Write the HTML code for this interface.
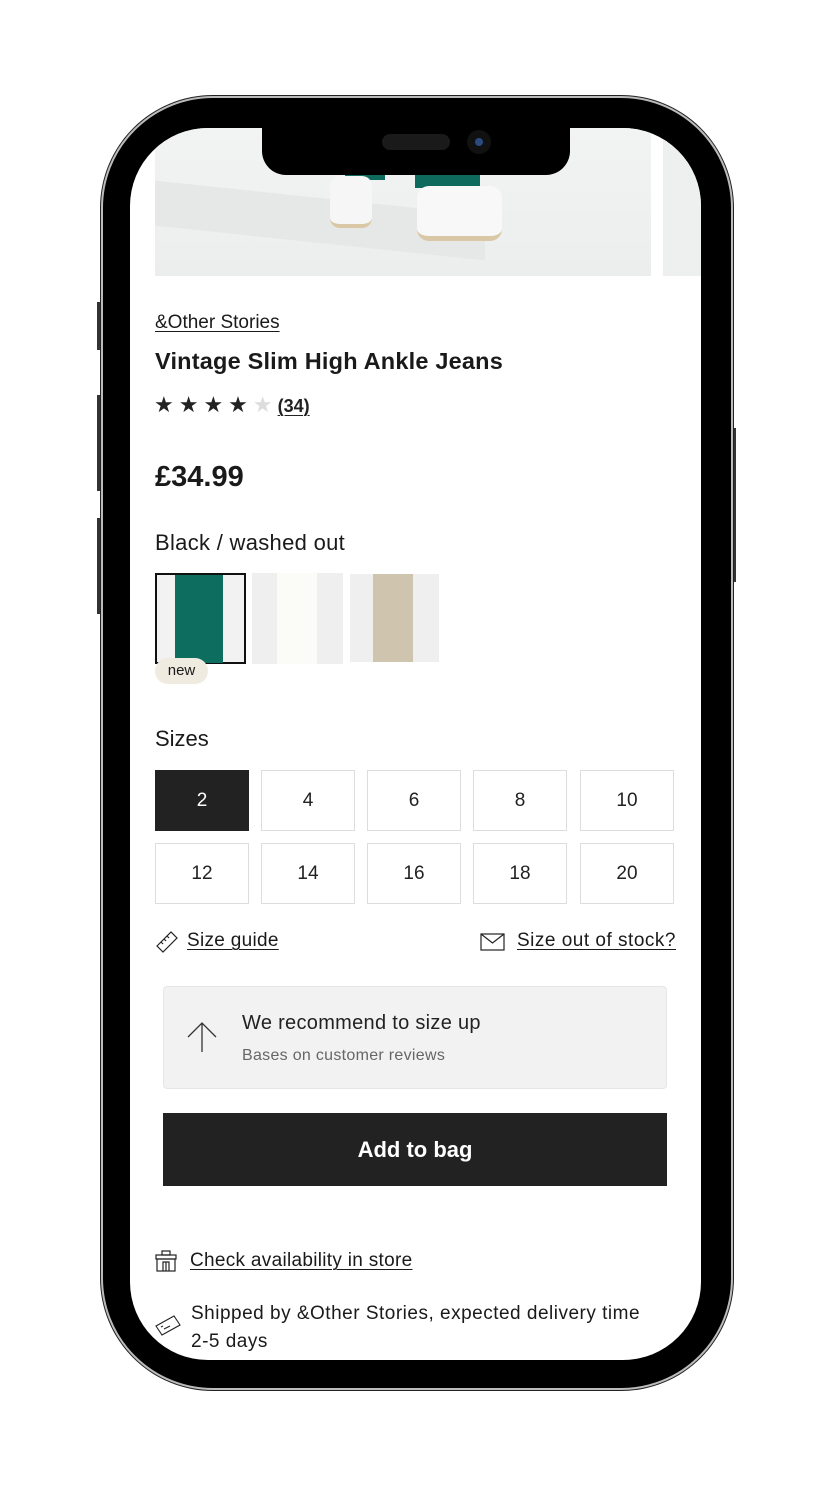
<!DOCTYPE html>
<html><head><meta charset="utf-8"><style>
*{box-sizing:border-box;margin:0;padding:0}
body{width:832px;height:1487px;background:#fff;position:relative;overflow:hidden;font-family:"Liberation Sans",sans-serif;color:#1a1a1a}
.frame{position:absolute;left:101px;top:96px;width:632px;height:1294px;border-radius:112px;background:#000;border:2px solid #bbb;box-shadow:0 0 0 1px #222}
.btn{position:absolute;background:#333;width:4px}
.screen{position:absolute;left:130px;top:128px;width:571px;height:1232px;border-radius:78px;background:#fff;overflow:hidden}
.notch{position:absolute;left:262px;top:120px;width:308px;height:55px;background:#000;border-radius:0 0 24px 24px}
.abs{position:absolute}
u{text-decoration:underline;text-underline-offset:3px;text-decoration-thickness:1px}
.sz{position:absolute;width:94px;height:61px;border:1px solid #ddd;display:flex;align-items:center;justify-content:center;font-size:19px;color:#222}
</style></head><body>
<div class="btn" style="left:97px;top:302px;height:48px"></div>
<div class="btn" style="left:97px;top:395px;height:96px"></div>
<div class="btn" style="left:97px;top:518px;height:96px"></div>
<div class="btn" style="left:732px;top:428px;height:154px"></div>
<div class="frame"></div>
<div class="screen">
 <div class="abs" style="left:25px;top:0;width:496px;height:148px;background:linear-gradient(#f2f3f3,#eceeee);overflow:hidden">
  <div class="abs" style="left:0;top:70px;width:330px;height:45px;background:#e6e8e8;transform:skewY(6deg)"></div>
  <div class="abs" style="left:190px;top:30px;width:40px;height:22px;background:#0d6a5c"></div>
  <div class="abs" style="left:260px;top:30px;width:65px;height:30px;background:#0d6a5c"></div>
  <div class="abs" style="left:175px;top:48px;width:42px;height:52px;background:#f6f6f6;border-radius:10px;border-bottom:4px solid #d9c7a5"></div>
  <div class="abs" style="left:262px;top:58px;width:85px;height:55px;background:#f8f8f8;border-radius:12px;border-bottom:5px solid #d9c7a5"></div>
 </div>
 <div class="abs" style="left:533px;top:0;width:40px;height:148px;background:#eef0f0"></div>
 <div class="abs" style="left:25px;top:184px;font-size:19px"><u>&amp;Other Stories</u></div>
 <div class="abs" style="left:25px;top:220px;font-size:23.5px;font-weight:bold;letter-spacing:0.2px">Vintage Slim High Ankle Jeans</div>
 <div class="abs" style="left:24px;top:264px;font-size:22px;letter-spacing:5px;color:#222">★★★★<span style="color:#ddd">★</span><b style="font-size:18px;letter-spacing:0"><u>(34)</u></b></div>
 <div class="abs" style="left:25px;top:333px;font-size:29px;font-weight:bold">£34.99</div>
 <div class="abs" style="left:25px;top:402px;font-size:22px;letter-spacing:0.3px">Black / washed out</div>
 <div class="abs" style="left:25px;top:445px;width:91px;height:91px;border:2px solid #111;background:#f2f2f2">
  <div class="abs" style="left:18px;top:0;width:48px;height:88px;background:#0d6e60"></div></div>
 <div class="abs" style="left:122px;top:445px;width:91px;height:91px;background:#efefef">
  <div class="abs" style="left:25px;top:0;width:40px;height:91px;background:#fbfbf8"></div></div>
 <div class="abs" style="left:220px;top:446px;width:89px;height:88px;background:#efefef">
  <div class="abs" style="left:23px;top:0;width:40px;height:88px;background:#cfc5ae"></div></div>
 <div class="abs" style="left:25px;top:530px;width:53px;height:26px;border-radius:13px;background:#f0ebe0;font-size:15px;text-align:center;line-height:26px">new</div>
 <div class="abs" style="left:25px;top:598px;font-size:22px">Sizes</div>
 <div class="sz" style="left:25px;top:642px;background:#222;color:#fff;border-color:#222">2</div>
 <div class="sz" style="left:131px;top:642px">4</div>
 <div class="sz" style="left:237px;top:642px">6</div>
 <div class="sz" style="left:343px;top:642px">8</div>
 <div class="sz" style="left:450px;top:642px">10</div>
 <div class="sz" style="left:25px;top:715px">12</div>
 <div class="sz" style="left:131px;top:715px">14</div>
 <div class="sz" style="left:237px;top:715px">16</div>
 <div class="sz" style="left:343px;top:715px">18</div>
 <div class="sz" style="left:450px;top:715px">20</div>
 <svg class="abs" style="left:25px;top:802px" width="24" height="24" viewBox="0 0 24 24" fill="none" stroke="#222" stroke-width="1.2"><path d="M2 16L16 2l6 6L8 22z M6 12l2 2 M9 9l2 2 M12 6l2 2"/></svg>
 <div class="abs" style="left:57px;top:802px;font-size:19px;letter-spacing:0.3px"><u>Size guide</u></div>
 <svg class="abs" style="left:350px;top:805px" width="25" height="18" viewBox="0 0 25 18" fill="none" stroke="#222" stroke-width="1.2"><rect x="1" y="1" width="23" height="16"/><path d="M1 1l11.5 9L24 1"/></svg>
 <div class="abs" style="left:387px;top:802px;font-size:19px;letter-spacing:0.5px"><u>Size out of stock?</u></div>
 <div class="abs" style="left:33px;top:858px;width:504px;height:103px;background:#f2f2f2;border:1px solid #e6e6e6;border-radius:4px">
  <svg class="abs" style="left:22px;top:34px" width="32" height="32" viewBox="0 0 32 32" fill="none" stroke="#333" stroke-width="1.3"><path d="M16 31V2 M2 16L16 2l14 14"/></svg>
  <div class="abs" style="left:78px;top:25px;font-size:20px;color:#222;letter-spacing:0.3px">We recommend to size up</div>
  <div class="abs" style="left:78px;top:60px;font-size:16px;color:#666;letter-spacing:0.3px">Bases on customer reviews</div>
 </div>
 <div class="abs" style="left:33px;top:985px;width:504px;height:73px;background:#222;color:#fff;font-size:22px;font-weight:bold;text-align:center;line-height:73px">Add to bag</div>
 <svg class="abs" style="left:25px;top:1122px" width="22" height="22" viewBox="0 0 22 22" fill="none" stroke="#222" stroke-width="1.2"><rect x="7" y="1" width="8" height="4"/><rect x="1" y="5" width="20" height="4"/><rect x="2" y="9" width="18" height="12"/><path d="M8 21V12h6v9 M11 12v9"/></svg>
 <div class="abs" style="left:60px;top:1122px;font-size:19px;letter-spacing:0.3px"><u>Check availability in store</u></div>
 <svg class="abs" style="left:25px;top:1186px" width="26" height="22" viewBox="0 0 26 22" fill="none" stroke="#222" stroke-width="1.1"><path d="M1 12L19 2l6 9L7 21z M6 13l2-1 M9 15l6-3"/></svg>
 <div class="abs" style="left:61px;top:1172px;font-size:19px;line-height:28px;letter-spacing:0.5px">Shipped by &amp;Other Stories, expected delivery time<br>2-5 days</div>
</div>
<div class="notch"><div class="abs" style="left:120px;top:14px;width:68px;height:16px;border-radius:8px;background:#1a1a1a"></div><div class="abs" style="left:205px;top:10px;width:24px;height:24px;border-radius:50%;background:#111"><div class="abs" style="left:8px;top:8px;width:8px;height:8px;border-radius:50%;background:#2a4a80"></div></div></div>
</body></html>
